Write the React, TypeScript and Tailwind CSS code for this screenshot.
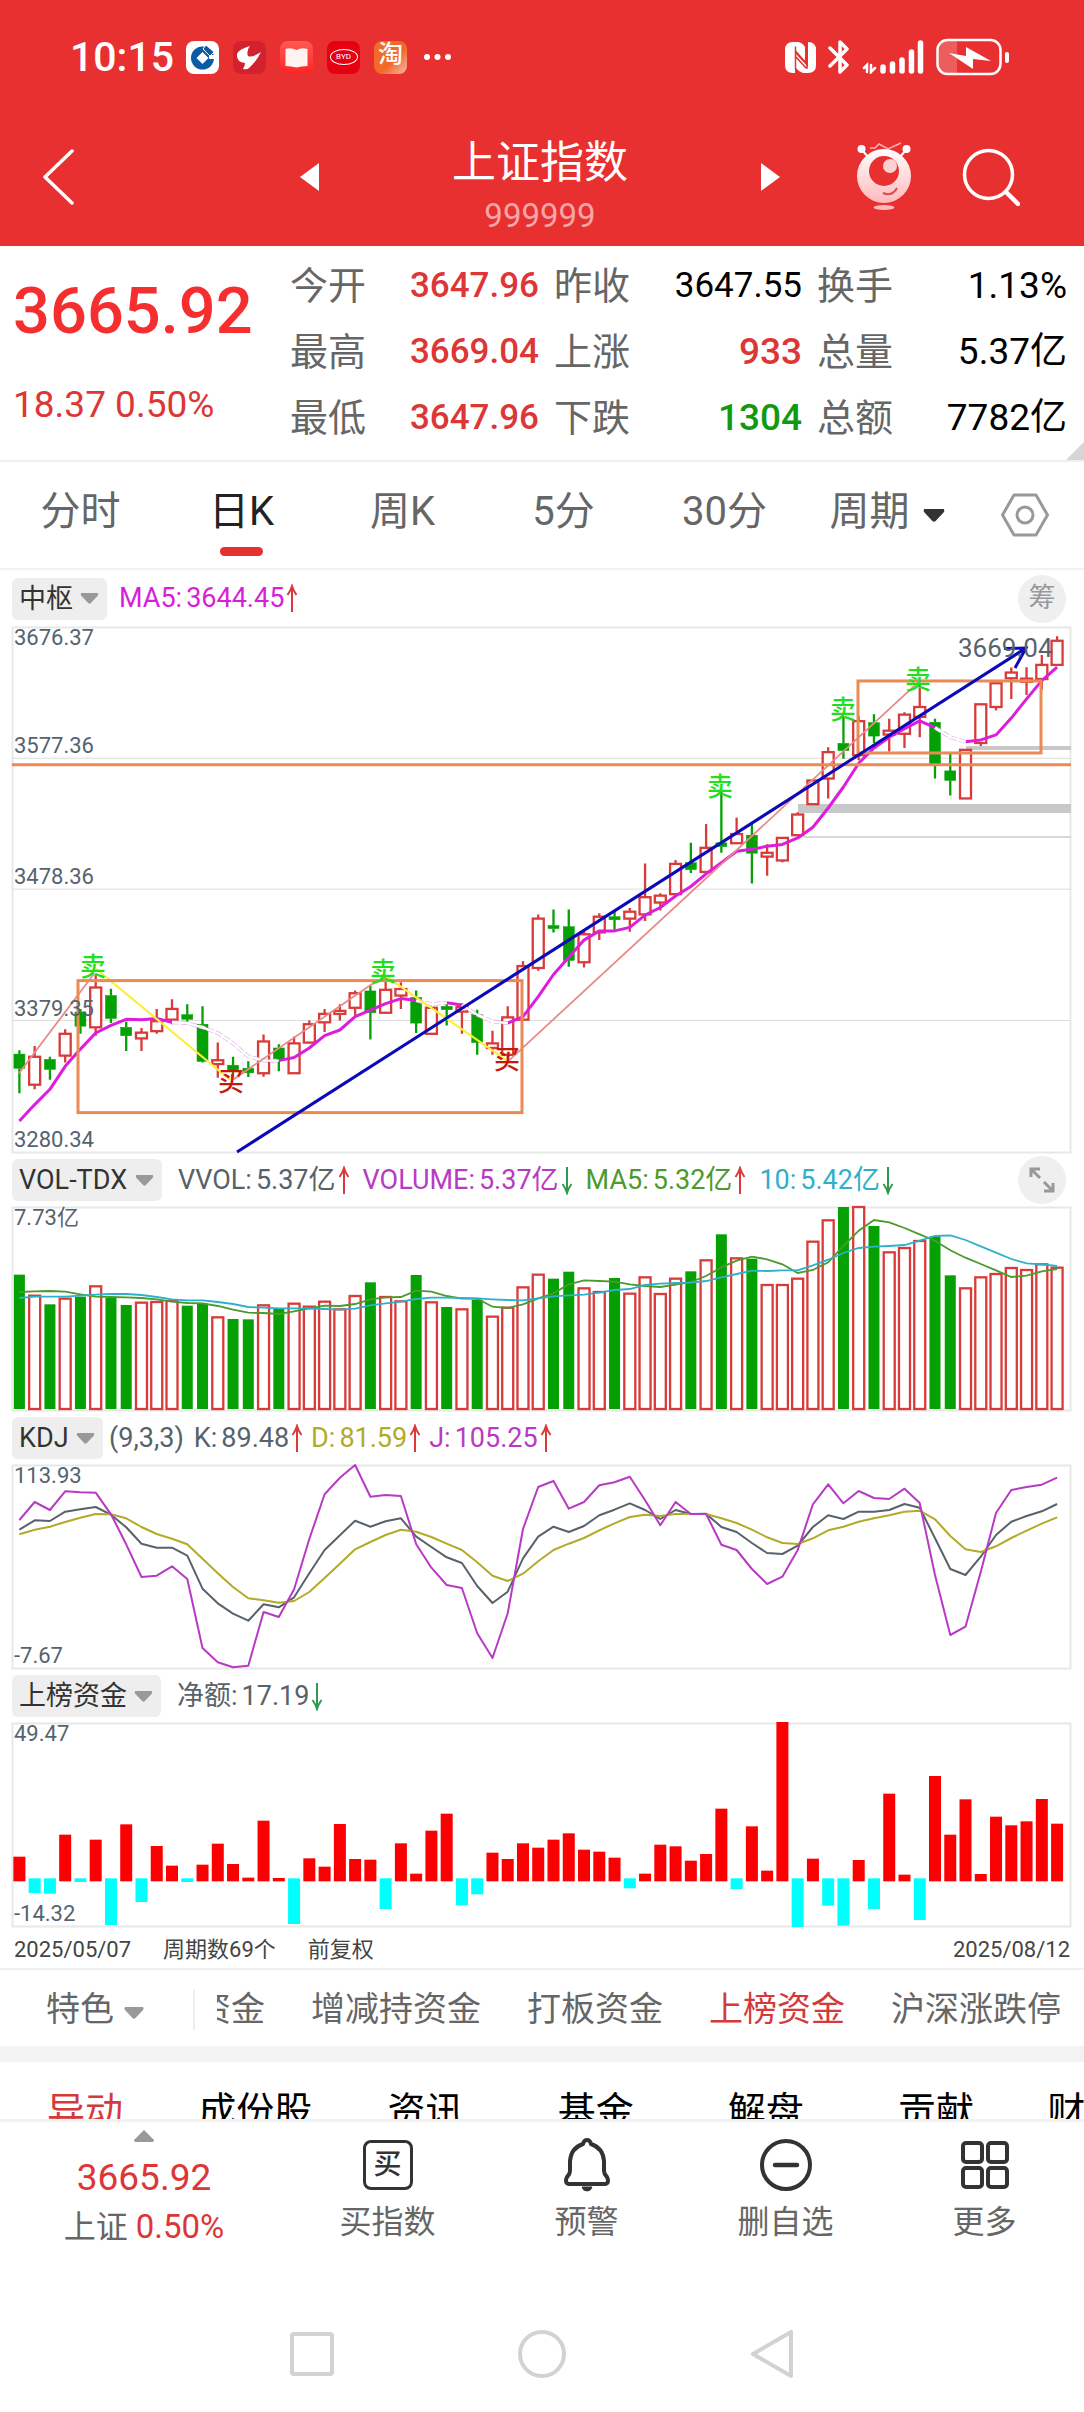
import React from "react";

/* ---------- chart data: one entry per trading day ---------- */

type Candle = ["r" | "g", number, number, number, number];

/* direction, high, body top, body bottom, low */
const CANDLES: Candle[] = [
  ["g", 1258, 1268, 1305, 1370], ["r", 1247, 1275, 1348, 1360], ["g", 1275, 1282, 1308, 1335],
  ["r", 1203, 1215, 1272, 1290], ["g", 1150, 1158, 1195, 1215], ["r", 1060, 1094, 1198, 1220],
  ["g", 1097, 1115, 1175, 1187], ["g", 1183, 1198, 1220, 1260], ["r", 1200, 1212, 1227, 1260],
  ["r", 1150, 1182, 1208, 1215], ["r", 1125, 1150, 1178, 1190], ["g", 1138, 1165, 1177, 1190],
  ["g", 1143, 1190, 1287, 1290], ["r", 1238, 1284, 1294, 1330], ["g", 1275, 1297, 1312, 1330],
  ["g", 1287, 1305, 1317, 1328], ["r", 1217, 1235, 1318, 1327], ["g", 1242, 1252, 1285, 1313],
  ["r", 1222, 1240, 1318, 1318], ["r", 1180, 1190, 1238, 1238], ["r", 1150, 1163, 1185, 1210],
  ["r", 1138, 1155, 1163, 1180], ["r", 1102, 1109, 1147, 1168], ["g", 1090, 1103, 1160, 1230],
  ["r", 1065, 1100, 1160, 1160], ["r", 1080, 1098, 1115, 1150], ["g", 1102, 1120, 1187, 1213],
  ["r", 1147, 1147, 1215, 1215], ["g", 1132, 1143, 1152, 1193], ["r", 1135, 1145, 1157, 1215],
  ["g", 1152, 1165, 1238, 1270], ["r", 1207, 1240, 1252, 1270], ["r", 1143, 1172, 1270, 1280],
  ["r", 1025, 1038, 1178, 1178], ["r", 903, 914, 1043, 1050], ["g", 890, 932, 940, 950],
  ["g", 890, 935, 1023, 1040], ["r", 945, 955, 1028, 1042], ["r", 900, 909, 950, 970],
  ["g", 895, 909, 917, 943], ["r", 886, 896, 914, 948], ["r", 770, 858, 903, 920],
  ["r", 848, 854, 872, 893], ["r", 761, 771, 850, 850], ["g", 716, 768, 786, 795],
  ["r", 667, 729, 792, 792], ["g", 580, 716, 726, 742], ["r", 650, 693, 717, 717],
  ["g", 667, 696, 743, 822], ["r", 720, 742, 752, 802], ["r", 703, 703, 762, 767],
  ["r", 636, 642, 696, 696], ["r", 553, 553, 615, 615], ["r", 466, 479, 548, 600],
  ["g", 385, 456, 475, 496], ["r", 385, 398, 487, 500], ["g", 380, 402, 437, 455],
  ["r", 392, 423, 433, 477], ["r", 375, 381, 431, 468], ["r", 300, 361, 387, 440],
  ["g", 392, 401, 510, 548], ["g", 480, 528, 553, 592], ["r", 473, 473, 600, 600],
  ["r", 354, 354, 455, 463], ["r", 299, 299, 361, 370], ["r", 258, 271, 286, 340],
  ["r", 257, 287, 295, 330], ["r", 225, 251, 288, 315], ["r", 176, 188, 251, 251],
];

const MA5 = [
  1443, 1400, 1360, 1300, 1255, 1213, 1193, 1177, 1178, 1175, 1185, 1187, 1198, 1213, 1240, 1274, 1285, 1285,
  1277, 1252, 1220, 1205, 1170, 1153, 1136, 1123, 1128, 1137, 1134, 1140, 1165, 1183, 1187, 1170, 1118, 1060,
  1015, 970, 946, 946, 937, 905, 885, 855, 830, 797, 768, 738, 733, 725, 720, 703, 675, 625, 570, 508, 468,
  440, 418, 397, 415, 440, 452, 447, 434, 390, 340, 292, 257,
];

/* stretches where the moving average is falling */
const FALLING = [[10, 17], [26, 28], [29, 32], [60, 62]];
const RISING = [[0, 10], [17, 26], [28, 29], [32, 60], [62, 68]];

const VOL = [
  374, 437, 463, 446, 440, 409, 444, 465, 458, 456, 453, 467, 461, 502, 507, 508, 466, 476, 461, 470, 455, 478,
  438, 397, 441, 454, 375, 457, 471, 478, 449, 500, 473, 412, 374, 386, 365, 415, 426, 384, 431, 382, 432, 386,
  364, 331, 253, 325, 326, 405, 405, 386, 275, 211, 171, 171, 228, 307, 294, 273, 259, 376, 415, 382, 372, 354,
  360, 343, 353,
];
const VOL_DIR = "grgrgrggrrrggrggrgrrrrrgrrgrgrgrrrrggrrgrrrrgrgrgrrrrrgrgrrrggrrrrrrr";
const VOL_MA5 = [
  426, 424, 423, 425, 433, 440, 441, 442, 444, 448, 455, 459, 460, 468, 479, 488, 489, 492, 484, 475, 467, 468,
  462, 448, 442, 441, 422, 425, 438, 446, 446, 470, 474, 463, 445, 430, 403, 391, 393, 395, 403, 408, 411, 404,
  396, 378, 352, 332, 320, 328, 343, 369, 360, 337, 288, 242, 210, 217, 234, 253, 272, 301, 323, 342, 361, 381,
  377, 364, 357,
];
const VOL_MA10 = [
  444, 440, 440, 440, 437, 434, 432, 432, 435, 441, 448, 451, 451, 456, 462, 471, 473, 475, 475, 476, 477, 479,
  476, 466, 460, 455, 447, 443, 443, 444, 445, 448, 450, 451, 445, 439, 436, 434, 428, 420, 417, 405, 401, 399,
  398, 393, 382, 372, 362, 363, 361, 361, 346, 329, 309, 294, 290, 288, 285, 272, 258, 256, 270, 289, 308, 327,
  340, 343, 348,
];

const LINE_J = [
  1110, 1056, 1080, 1024, 1027, 1028, 1093, 1183, 1281, 1277, 1249, 1287, 1494, 1537, 1552, 1547, 1386, 1401,
  1318, 1167, 1033, 983, 945, 1040, 1035, 1038, 1183, 1253, 1305, 1314, 1450, 1524, 1390, 1137, 1011, 993,
  1076, 1056, 1006, 997, 980, 1051, 1126, 1056, 1092, 1092, 1184, 1200, 1257, 1302, 1280, 1200, 1063, 1003,
  1060, 1023, 1044, 1047, 1016, 1059, 1275, 1455, 1430, 1265, 1089, 1020, 1011, 1004, 983,
];
const LINE_K = [
  1139, 1111, 1113, 1085, 1078, 1071, 1094, 1132, 1181, 1193, 1193, 1217, 1316, 1360, 1391, 1412, 1363, 1372,
  1342, 1270, 1200, 1156, 1112, 1130, 1114, 1105, 1160, 1191, 1222, 1239, 1308, 1359, 1325, 1225, 1160, 1130,
  1146, 1128, 1096, 1079, 1060, 1080, 1107, 1080, 1092, 1091, 1131, 1146, 1179, 1209, 1212, 1187, 1131, 1096,
  1107, 1085, 1085, 1080, 1062, 1073, 1165, 1257, 1275, 1220, 1155, 1115, 1098, 1084, 1062,
];
const LINE_D = [
  1153, 1139, 1130, 1116, 1103, 1092, 1093, 1105, 1131, 1152, 1166, 1183, 1226, 1270, 1311, 1345, 1351, 1358,
  1353, 1326, 1284, 1241, 1198, 1176, 1155, 1139, 1145, 1161, 1181, 1200, 1237, 1277, 1293, 1271, 1234, 1200,
  1181, 1164, 1141, 1120, 1101, 1094, 1098, 1092, 1092, 1092, 1105, 1119, 1139, 1162, 1179, 1182, 1165, 1141,
  1130, 1115, 1105, 1096, 1085, 1082, 1108, 1158, 1198, 1206, 1189, 1164, 1142, 1121, 1102,
];

/* bar ends; a negative number is an outflow bar hanging below the axis */
const FUNDS = [
  589, -698, -700, 523, -665, 538, -794, 492, -725, 557, 616, -665, 613, 550, 611, 652, 481, 653, -791, 594,
  619, 491, 596, 598, -746, 549, 640, 511, 460, -735, -702, 577, 596, 549, 562, 538, 519, 568, 574, 592, -684,
  640, 553, 558, 601, 581, 445, -686, 498, 631, 185, -800, 595, -736, -796, 599, -746, 400, 643, -779, 347,
  523, 417, 641, 469, 495, 483, 416, 490,
];

const cx = (i: number) => 7.4 + 15.26 * i;
const priceY = (v: number) => (v - 152) / 2.613;
const scaleFrom = (top: number) => (v: number) => (v - top) / 3;
const points = (data: number[], y: (v: number) => number, from = 0, to = data.length - 1) =>
  data
    .slice(from, to + 1)
    .map((v, k) => `${cx(from + k).toFixed(1)},${y(v).toFixed(1)}`)
    .join(" ");

const RED = "#d93a3a";
const GREEN = "#04a004";

/* ---------- small drawings ---------- */

function Caret({ className }: { className: string }) {
  return (
    <svg viewBox="0 0 20 12" className={className} aria-hidden="true">
      <path d="M1 0h18q1 2 0 3l-7.500 8q-1.500 1.500-3 0L1 3q-1-1 0-3z" fill="currentColor" />
    </svg>
  );
}

function Trend({ up }: { up?: boolean }) {
  return (
    <svg viewBox="0 0 12 29" className="ml-0.5 h-[29px] w-3 shrink-0" fill="none" stroke={up ? "#d93a3a" : "#2f9950"} strokeWidth="2" aria-hidden="true">
      {up ? <path d="M6 28V2M1.500 11Q4.500 7 6 2Q7.500 7 10.500 11" /> : <path d="M6 1v26M1.500 18Q4.500 22 6 27Q7.500 22 10.500 18" />}
    </svg>
  );
}

function StatusIcons() {
  return (
    <div className="flex items-center">
      <svg viewBox="0 0 31 33" className="h-[33px] w-[31px]" aria-label="NFC">
        <path d="M8 1h2l0 31H8q-8 0-8-8V9q0-8 8-8z" fill="#fff" />
        <path d="M7 1h5q5 0 8 5v14L7 5z" fill="#fff" />
        <path d="M23 1q8 0 8 8v15q0 8-8 8h-3q3-2 3-6z" fill="#fff" />
        <path d="M10 12l13 14v6h-5q-5-2-8-6z" fill="#fff" />
        <path d="M10.500 5.500V28M22 3v25M11 11l11 12M11 16l10 11" stroke="#e83030" strokeWidth="1.500" fill="none" />
      </svg>
      <svg viewBox="0 0 22 34" className="ml-3 h-[34px] w-[22px]" fill="none" stroke="#fff" strokeWidth="3.500" strokeLinejoin="round" strokeLinecap="round" aria-label="Bluetooth">
        <path d="M2 8l17 17-7 7V2l7 7L2 26" />
      </svg>
      <svg viewBox="0 0 62 34" className="ml-3 h-[34px] w-[62px]" fill="none" stroke="#fff" strokeLinecap="round" aria-label="Signal">
        <path d="M2 28l3-3v7M9 25v7l4-4" strokeWidth="2.500" />
        <path d="M21 27v4M30.500 24v7M40 20v11M49.500 12v19M58.500 3v28" strokeWidth="5.500" />
      </svg>
      <svg viewBox="0 0 74 38" className="ml-3 h-[38px] w-[74px]" aria-label="Battery charging">
        <path d="M12 3h9v32h-9q-9 0-9-9V12q0-9 9-9z" fill="#fff" opacity=".22" />
        <rect x="1.500" y="2" width="63" height="34" rx="10" fill="none" stroke="#fff" strokeWidth="2.500" />
        <path d="M13 15l17 3V9l25 14-18-2v10z" fill="#fff" />
        <rect x="69" y="14" width="4" height="11" rx="2" fill="#fff" />
      </svg>
    </div>
  );
}

function AppIcons() {
  return (
    <div className="ml-3 flex items-center gap-3.5" aria-hidden="true">
      <svg viewBox="0 0 33 33" className="size-[33px]">
        <rect width="33" height="33" rx="8" fill="#fff" />
        <circle cx="16.500" cy="17" r="11.500" fill="#0a5aa5" />
        <path d="M16.500 11l6 6-6 6-6-6z" fill="#fff" />
        <path d="M23 14h8v4h-8z" fill="#fff" />
        <path d="M17 8l3-4 8 7-4 4z" fill="#0a5aa5" stroke="#fff" strokeWidth="1" />
      </svg>
      <svg viewBox="0 0 33 33" className="size-[33px]">
        <rect width="33" height="33" rx="8" fill="#d3222f" />
        <path d="M17 5q-4 5-2 10 4 2 13-4-5 10-12 16-2 2-6 1 2-3 2-6-9-1-8-9 2-5 13-8z" fill="#fff" />
      </svg>
      <svg viewBox="0 0 33 33" className="size-[33px]">
        <defs>
          <linearGradient id="reader" x1="0" y1="0" x2="0" y2="1">
            <stop offset="0" stopColor="#ff5a50" />
            <stop offset="1" stopColor="#ff2425" />
          </linearGradient>
        </defs>
        <rect width="33" height="33" rx="8" fill="url(#reader)" />
        <path d="M5.500 8q6-2 11 1 5-3 11-1v17q-6 0-11 1.500Q11 25 5.500 25z" fill="#fff4f2" />
      </svg>
      <div className="flex size-[33px] items-center justify-center rounded-lg bg-[#e60012]">
        <span className="flex h-4 w-7 items-center justify-center rounded-[50%] border border-white text-[8px] leading-none text-white">BYD</span>
      </div>
      <div className="flex size-[33px] items-start justify-center overflow-hidden rounded-lg bg-linear-to-br from-[#f26a2a] from-60% to-[#f3b7a0] text-[25px] leading-[28px] font-medium text-white">淘</div>
      <svg viewBox="0 0 28 8" className="ml-0.5 h-2 w-7" fill="#fff">
        <circle cx="4" cy="4" r="3" />
        <circle cx="14.500" cy="4" r="3" />
        <circle cx="25" cy="4" r="3" />
      </svg>
    </div>
  );
}

function Mascot() {
  return (
    <svg viewBox="0 0 56 70" className="h-[70px] w-14" fill="none" aria-hidden="true">
      <defs>
        <linearGradient id="mascot" x1="0" y1="0" x2="0" y2="1">
          <stop offset="0" stopColor="#fff" />
          <stop offset="1" stopColor="#ffb9bb" />
        </linearGradient>
      </defs>
      <path d="M14 6h5l4-4 9 5 13-6" stroke="#ffb0b0" strokeWidth="1.500" />
      <path d="M6 8l7 8M50 8l-7 8" stroke="#fff" strokeWidth="2" />
      <circle cx="5.500" cy="7" r="4" fill="#fff" />
      <circle cx="50.500" cy="7" r="4" fill="#fff" />
      <circle cx="28" cy="34" r="27" fill="url(#mascot)" />
      <circle cx="28" cy="29" r="15" fill="#e83030" />
      <circle cx="34" cy="24" r="7" fill="#ffd0d0" />
      <path d="M27 51q9 4 14-5" stroke="#d94a4a" strokeWidth="2" />
      <ellipse cx="28" cy="65.500" rx="10.500" ry="2.500" fill="#ffb9bb" />
    </svg>
  );
}

/* ---------- indicator panels ---------- */

function Picker({ label, options }: { label: string; options: string[] }) {
  return (
    <span className="relative inline-flex items-center rounded-md bg-[#eeeeee] text-[#333]">
      <select aria-label={label} className="h-[42px] appearance-none bg-transparent pr-[34px] pl-[7px] text-[27px] leading-[42px] outline-none">
        {options.map((o) => (
          <option key={o}>{o}</option>
        ))}
      </select>
      <Caret className="pointer-events-none absolute right-2 h-[11px] w-[19px] text-[#999]" />
    </span>
  );
}

function Reading({ label, value, color, up }: { label: string; value: string; color: string; up?: boolean }) {
  return (
    <span className={`flex items-center ${color}`}>
      <span>{label}</span>
      <span className="ml-1">{value}</span>
      <Trend up={up} />
    </span>
  );
}

function PanelHead({ children, first }: { children: React.ReactNode; first?: boolean }) {
  return (
    <div className={`flex items-center text-[27px] leading-none whitespace-nowrap ${first ? "h-[57px]" : "h-[54px]"}`}>{children}</div>
  );
}

function Frame({ height }: { height: number }) {
  return <rect x="0.500" y="0.500" width="1058" height={height - 1} fill="none" stroke="#e8e8e8" strokeWidth="2" />;
}

const AXIS = "absolute left-0.5 text-[22px] leading-none text-[#55636f]";

function PriceChart() {
  const sells: [number, number][] = [[81, 1038], [371, 1052], [708, 568], [831, 365], [906, 287]];
  const buys: [number, number][] = [[219, 1337], [495, 1282]];
  return (
    <div className="relative">
      <svg viewBox="0 0 1060 526" className="block h-auto w-full overflow-visible">
        <Frame height={526} />
        {[495, 837, 1180].map((v) => (
          <path key={v} d={`M0 ${priceY(v)}H1059`} stroke="#dcdcdc" strokeWidth="1" />
        ))}
        <rect x="786" y="177" width="273" height="9" fill="#c8c8c8" />
        <rect x="954" y="119" width="105" height="4" fill="#c8c8c8" />
        <path d="M792 210H1059" stroke="#cccccc" strokeWidth="1.500" />
        {CANDLES.map(([dir, hi, top, bottom, lo], i) => {
          const x = cx(i);
          const color = dir === "r" ? RED : GREEN;
          return (
            <g key={i} stroke={color} strokeWidth="2.300">
              <path d={`M${x} ${priceY(hi)}V${priceY(top)}M${x} ${priceY(bottom)}V${priceY(lo)}`} />
              <rect
                x={x - 5.5}
                y={priceY(top)}
                width="11"
                height={priceY(bottom) - priceY(top)}
                fill={dir === "r" ? "#fff" : GREEN}
                strokeWidth={dir === "r" ? 2.3 : 0.5}
              />
            </g>
          );
        })}
        <g fill="none" strokeWidth="3" strokeLinejoin="round" stroke="#dc1edc">
          {RISING.map(([a, b]) => (
            <polyline key={a} points={points(MA5, priceY, a, b)} />
          ))}
        </g>
        {FALLING.map(([a, b]) => (
          <g key={a} fill="none">
            <polyline points={points(MA5, priceY, a, b)} stroke="#e3b4ea" strokeWidth="3.800" strokeDasharray="7 2" />
            <polyline points={points(MA5, priceY, a, b)} stroke="#fff" strokeWidth="2.300" />
          </g>
        ))}
        <g fill="none" stroke="#e98a8a" strokeWidth="1.800">
          <path d={`M7 ${priceY(1318)}L82 ${priceY(1058)}M221 ${priceY(1335)}L360 ${priceY(1085)}L374 ${priceY(1070)}M496 ${priceY(1287)}L908 ${priceY(292)}`} />
        </g>
        <path d={`M84 ${priceY(1045)}L218 ${priceY(1335)}M374 ${priceY(1065)}L496 ${priceY(1287)}`} stroke="#fbee3c" strokeWidth="2.200" fill="none" />
        <g fill="none" stroke="#ea8a55" strokeWidth="3">
          <path d={`M0 ${priceY(512)}H1059`} />
          <rect x="66" y={priceY(1076)} width="444" height="132" />
          <rect x="846" y={priceY(293)} width="183" height="72" />
        </g>
        <g fill="none" stroke="#0a0ab8" strokeWidth="3">
          <path d="M225 525L1014 21M992 21.500L1014 21L1003 41" />
        </g>
        <g fontSize="26" fontWeight="500" textAnchor="middle">
          {sells.map(([x, y]) => (
            <text key={x} x={x} y={priceY(y) + 10} fill="#1fdf1f">卖</text>
          ))}
          {buys.map(([x, y]) => (
            <text key={x} x={x} y={priceY(y) + 10} fill="#c8180c">买</text>
          ))}
        </g>
        <text x="946" y="30" fontSize="26" fill="#55636f">3669.04</text>
      </svg>
      <span className={`${AXIS} top-0`}>3676.37</span>
      <span className={`${AXIS} top-[20.500%]`}>3577.36</span>
      <span className={`${AXIS} top-[45.500%]`}>3478.36</span>
      <span className={`${AXIS} top-[70.500%]`}>3379.35</span>
      <span className={`${AXIS} bottom-0.5`}>3280.34</span>
    </div>
  );
}

function VolumeChart() {
  const y = scaleFrom(171);
  return (
    <div className="relative">
      <svg viewBox="0 0 1060 204" className="block h-auto w-full overflow-visible">
        <Frame height={204} />
        {VOL.map((v, i) =>
          VOL_DIR[i] === "g" ? (
            <rect key={i} x={cx(i) - 5.5} y={y(v)} width="11" height={202 - y(v)} fill={GREEN} />
          ) : (
            <rect key={i} x={cx(i) - 5.5} y={y(v)} width="11" height={202 - y(v)} fill="#fff" stroke={RED} strokeWidth="2.300" />
          ),
        )}
        <polyline points={points(VOL_MA5, y)} fill="none" stroke="#4b9a2d" strokeWidth="1.800" />
        <polyline points={points(VOL_MA10, y)} fill="none" stroke="#2fb0c9" strokeWidth="1.800" />
      </svg>
      <span className={`${AXIS} top-0`}>7.73亿</span>
    </div>
  );
}

function KdjChart() {
  const y = scaleFrom(945);
  return (
    <div className="relative">
      <svg viewBox="0 0 1060 204" className="block h-auto w-full overflow-visible">
        <Frame height={204} />
        <g fill="none" strokeWidth="2" strokeLinejoin="round">
          <polyline points={points(LINE_K, y)} stroke="#57626b" />
          <polyline points={points(LINE_D, y)} stroke="#b3aa28" />
          <polyline points={points(LINE_J, y)} stroke="#b83ac4" />
        </g>
      </svg>
      <span className={`${AXIS} top-0`}>113.93</span>
      <span className={`${AXIS} bottom-0.5`}>-7.67</span>
    </div>
  );
}

function FundsChart() {
  const y = scaleFrom(188);
  return (
    <div className="relative">
      <svg viewBox="0 0 1060 204" className="block h-auto w-full overflow-visible">
        <Frame height={204} />
        {FUNDS.map((v, i) =>
          v > 0 ? (
            <rect key={i} x={cx(i) - 6} y={y(v)} width="12" height={y(663) - y(v)} fill="#fb0000" />
          ) : (
            <rect key={i} x={cx(i) - 6} y={y(654)} width="12" height={y(-v) - y(654)} fill="#00ffff" />
          ),
        )}
      </svg>
      <span className={`${AXIS} top-0`}>49.47</span>
      <span className={`${AXIS} bottom-0.5`}>-14.32</span>
    </div>
  );
}

/* ---------- page sections ---------- */

function Header() {
  return (
    <header className="bg-[#e83030] text-white">
      <div className="flex items-center justify-between pt-8 pr-[74px] pl-[70px]">
        <div className="flex items-center">
          <span className="text-[41px] leading-[50px] font-medium">10:15</span>
          <AppIcons />
        </div>
        <StatusIcons />
      </div>
      <div className="grid grid-cols-[300fr_484fr_300fr] items-center pt-12 pb-2.5">
        <div className="flex pb-3 pl-[42px]">
          <button aria-label="返回">
            <svg viewBox="0 0 32 56" className="h-14 w-8" fill="none" stroke="#fff" strokeWidth="3.500" strokeLinecap="round" strokeLinejoin="round">
              <path d="M30 2L3 28l27 26" />
            </svg>
          </button>
        </div>
        <div className="flex items-center justify-between">
          <button aria-label="上一个" className="pb-3">
            <svg viewBox="0 0 19 28" className="h-7 w-[19px]" fill="#fff"><path d="M19 0v28L0 14z" /></svg>
          </button>
          <div className="flex flex-col items-center">
            <h1 className="text-[44px] leading-[66px] font-normal">上证指数</h1>
            <p className="text-[33px] leading-[40px] text-[#f6a6a6]">999999</p>
          </div>
          <button aria-label="下一个" className="pr-1 pb-3">
            <svg viewBox="0 0 19 28" className="h-7 w-[19px]" fill="#fff"><path d="M0 0v28l19-14z" /></svg>
          </button>
        </div>
        <div className="flex items-center justify-end gap-[50px] pr-16 pb-3">
          <button aria-label="助手"><Mascot /></button>
          <button aria-label="搜索">
            <svg viewBox="0 0 58 58" className="size-[58px]" fill="none" stroke="#fff" strokeWidth="3.500" strokeLinecap="round">
              <circle cx="26.500" cy="26.500" r="24" />
              <path d="M44 44l12 12" strokeWidth="4.500" />
            </svg>
          </button>
        </div>
      </div>
    </header>
  );
}

function Pair({ label, value, tone, small }: { label: string; value: string; tone: string; small?: boolean }) {
  return (
    <div className="flex items-center justify-between leading-[66px]">
      <dt className="text-[38px] text-[#666]">{label}</dt>
      <dd className={`${small ? "text-[35px]" : "text-[37px]"} ${tone}`}>{value}</dd>
    </div>
  );
}

function Quote() {
  const up = "text-[#dd3636]";
  return (
    <section className="relative grid grid-cols-[262fr_249fr_248fr_250fr] gap-x-[15px] border-b-2 border-[#efefef] pt-[7px] pr-[17px] pb-[9px] pl-[13px]">
      <div className="flex flex-col">
        <strong className="pt-5 text-[65px] leading-[76px] font-medium text-[#f52f2f]">3665.92</strong>
        <span className={`pt-[34px] text-[37px] leading-[44px] ${up}`}>18.37 0.50%</span>
      </div>
      <dl>
        <Pair label="今开" value="3647.96" tone={`font-medium ${up}`} small />
        <Pair label="最高" value="3669.04" tone={`font-medium ${up}`} small />
        <Pair label="最低" value="3647.96" tone={`font-medium ${up}`} small />
      </dl>
      <dl>
        <Pair label="昨收" value="3647.55" tone="text-black" small />
        <Pair label="上涨" value="933" tone={`font-medium ${up}`} />
        <Pair label="下跌" value="1304" tone="font-medium text-[#109a10]" />
      </dl>
      <dl>
        <Pair label="换手" value="1.13%" tone="text-black" />
        <Pair label="总量" value="5.37亿" tone="text-black" />
        <Pair label="总额" value="7782亿" tone="text-black" />
      </dl>
      <svg viewBox="0 0 18 18" className="absolute right-0 bottom-0 size-[18px]" aria-hidden="true"><path d="M18 0v18H0z" fill="#d6d6d6" /></svg>
    </section>
  );
}

function PeriodTabs() {
  return (
    <nav className="grid grid-cols-[repeat(6,161fr)_118fr] items-stretch border-b-2 border-[#f2f2f2] text-[40px] leading-[60px] text-[#666]">
      {["分时", "日K", "周K", "5分", "30分"].map((t) => (
        <button key={t} className={`flex flex-col items-center pt-5 ${t === "日K" ? "text-[#222]" : ""}`}>
          {t}
          {t === "日K" && <span className="mt-[5px] mb-3 h-[9px] w-[43px] rounded-full bg-[#e43131]" />}
        </button>
      ))}
      <div className="relative flex items-start justify-center pt-5">
        <select aria-label="周期" className="h-[60px] appearance-none bg-transparent pr-8 outline-none">
          <option>周期</option>
        </select>
        <Caret className="pointer-events-none absolute top-[47px] right-[21px] h-[13px] w-[22px] text-[#333]" />
      </div>
      <button aria-label="设置" className="flex items-start justify-center pt-[31px]">
        <svg viewBox="0 0 48 44" className="h-11 w-12" fill="none" stroke="#999" strokeWidth="3" strokeLinejoin="round">
          <path d="M13 2h22l11.500 20L35 42H13L1.500 22z" />
          <circle cx="24" cy="22" r="8" />
        </svg>
      </button>
    </nav>
  );
}

function Charts() {
  const round = "mr-1.5 ml-auto flex size-12 items-center justify-center rounded-full bg-[#efefef] text-[#999]";
  return (
    <section className="px-3">
      <PanelHead first>
        <Picker label="主图指标" options={["中枢"]} />
        <div className="ml-3"><Reading label="MA5:" value="3644.45" color="text-[#d91ed9]" up /></div>
        <button className={round}>筹</button>
      </PanelHead>
      <PriceChart />
      <PanelHead>
        <Picker label="成交量指标" options={["VOL-TDX"]} />
        <div className="ml-4 flex gap-[13px]">
          <Reading label="VVOL:" value="5.37亿" color="text-[#57626b]" up />
          <Reading label="VOLUME:" value="5.37亿" color="text-[#b83ac4]" />
          <Reading label="MA5:" value="5.32亿" color="text-[#4b9a2d]" up />
          <Reading label="10:" value="5.42亿" color="text-[#2fb0c9]" />
        </div>
        <button className={round} aria-label="放大">
          <svg viewBox="0 0 26 26" className="size-[26px]" fill="none" stroke="currentColor" strokeWidth="3">
            <path d="M2 10V2h9M2 2l9 9M24 16v8h-9M24 24l-9-9" />
          </svg>
        </button>
      </PanelHead>
      <VolumeChart />
      <PanelHead>
        <Picker label="副图指标" options={["KDJ"]} />
        <span className="ml-1.5 text-[#57626b]">(9,3,3)</span>
        <div className="ml-2.5 flex gap-2">
          <Reading label="K:" value="89.48" color="text-[#57626b]" up />
          <Reading label="D:" value="81.59" color="text-[#b3aa28]" up />
          <Reading label="J:" value="105.25" color="text-[#b83ac4]" up />
        </div>
      </PanelHead>
      <KdjChart />
      <PanelHead>
        <Picker label="资金指标" options={["上榜资金"]} />
        <div className="ml-4"><Reading label="净额:" value="17.19" color="text-[#57626b]" /></div>
      </PanelHead>
      <FundsChart />
      <div className="flex gap-8 pt-1 pr-0.5 pl-0.5 text-[22px] leading-[37px] text-[#444]">
        <span>2025/05/07</span>
        <span>周期数69个</span>
        <span>前复权</span>
        <span className="ml-auto">2025/08/12</span>
      </div>
    </section>
  );
}

function FeatureRow() {
  return (
    <div className="flex items-center border-t-2 border-[#efefef] pt-[3px] text-[34px] leading-[73px] text-[#666]">
      <div className="relative ml-[46px] flex shrink-0 items-center">
        <select aria-label="特色" className="h-[73px] appearance-none bg-transparent pr-8 outline-none">
          <option>特色</option>
        </select>
        <Caret className="pointer-events-none absolute right-0.5 mt-1.5 h-3 w-5 text-[#999]" />
      </div>
      <div className="ml-[47px] h-10 w-0.5 shrink-0 bg-[#eeeeee]" />
      <nav className="ml-[22px] flex min-w-0 flex-1 gap-[46px] overflow-hidden whitespace-nowrap">
        <a href="#fund" className="-ml-5">资金</a>
        <a href="#holding">增减持资金</a>
        <a href="#limit">打板资金</a>
        <a href="#listed" className="text-[#d43a3a]">上榜资金</a>
        <a href="#stop">沪深涨跌停</a>
      </nav>
    </div>
  );
}

function InfoTabs() {
  return (
    <nav className="flex h-[57px] overflow-hidden pt-7 text-[38px] leading-[42px] whitespace-nowrap text-black">
      {["异动", "成份股", "资讯", "基金", "解盘", "贡献"].map((t) => (
        <a key={t} href={`#${t}`} className={`w-[15.700%] shrink-0 text-center ${t === "异动" ? "text-[#d43a3a]" : ""}`}>{t}</a>
      ))}
      <a href="#finance" className="shrink-0 pl-[26px]">财</a>
    </nav>
  );
}

function Action({ label, children }: { label: string; children: React.ReactNode }) {
  return (
    <button className="flex flex-col items-center pt-4 text-[32px] leading-[44px] text-[#666]">
      {children}
      <span className="pt-2">{label}</span>
    </button>
  );
}

function BottomBar() {
  const icon = "h-[54px] w-[54px]";
  return (
    <footer className="border-t-[3px] border-[#f2f2f2]">
      <div className="grid grid-cols-[288fr_repeat(4,199fr)]">
        <button className="flex flex-col items-center pt-2 text-[#dd3636]">
          <svg viewBox="0 0 20 12" className="h-3 w-5" aria-hidden="true"><path d="M10 0l10 10q0 2-2 2H2q-2 0-2-2z" fill="#999" /></svg>
          <span className="pt-3.5 text-[37px] leading-[44px]">3665.92</span>
          <span className="flex items-baseline gap-2 pt-1 text-[33px] leading-[46px]"><span className="text-[32px] text-[#666]">上证</span>0.50%</span>
        </button>
        <Action label="买指数">
          <span className="flex h-[54px] items-center">
            <span className="flex size-[50px] items-center justify-center rounded-lg border-[3px] border-[#333] text-[28px] leading-none font-medium text-[#333]">买</span>
          </span>
        </Action>
        <Action label="预警">
          <svg viewBox="0 0 54 54" className={icon} fill="none" stroke="#333" strokeWidth="4" strokeLinejoin="round">
            <path d="M27 2q3 0 4 4 12 4 13 17v10q0 3 3 6 3 6-2 7H9q-5-1-2-7 3-3 3-6V23Q11 10 23 6q1-4 4-4z" />
            <path d="M22 49h10q-1 4-5 4t-5-4z" fill="#333" strokeWidth="1" />
          </svg>
        </Action>
        <Action label="删自选">
          <svg viewBox="0 0 54 54" className={icon} fill="none" stroke="#333" strokeWidth="4" strokeLinecap="round">
            <circle cx="27" cy="27" r="24" />
            <path d="M16 27h22" strokeWidth="4.500" />
          </svg>
        </Action>
        <Action label="更多">
          <svg viewBox="0 0 54 54" className={icon} fill="none" stroke="#333" strokeWidth="4">
            <rect x="5" y="5" width="19" height="19" rx="3" />
            <rect x="30" y="5" width="19" height="19" rx="3" />
            <rect x="5" y="30" width="19" height="19" rx="3" />
            <rect x="30" y="30" width="19" height="19" rx="3" />
          </svg>
        </Action>
      </div>
      <div className="flex items-center justify-center gap-[182px] pt-20 pb-[34px]">
        <button aria-label="最近任务">
          <svg viewBox="0 0 48 48" className="size-12" fill="none" stroke="#d2d2d2" strokeWidth="4"><rect x="4" y="4" width="40" height="40" rx="2" /></svg>
        </button>
        <button aria-label="主屏幕">
          <svg viewBox="0 0 48 48" className="size-12" fill="none" stroke="#d2d2d2" strokeWidth="4"><circle cx="24" cy="24" r="22" /></svg>
        </button>
        <button aria-label="系统返回">
          <svg viewBox="0 0 48 48" className="size-12" fill="none" stroke="#d2d2d2" strokeWidth="4" strokeLinejoin="round"><path d="M43 2v44L5 24z" /></svg>
        </button>
      </div>
    </footer>
  );
}

export default function App() {
  return (
    <div className="min-h-screen overflow-x-hidden bg-white font-[Roboto,'Noto_Sans_CJK_SC',sans-serif] antialiased">
      <Header />
      <main>
        <Quote />
        <PeriodTabs />
        <Charts />
        <FeatureRow />
        <div className="h-4 bg-[#f3f3f3]" />
        <InfoTabs />
      </main>
      <BottomBar />
    </div>
  );
}
